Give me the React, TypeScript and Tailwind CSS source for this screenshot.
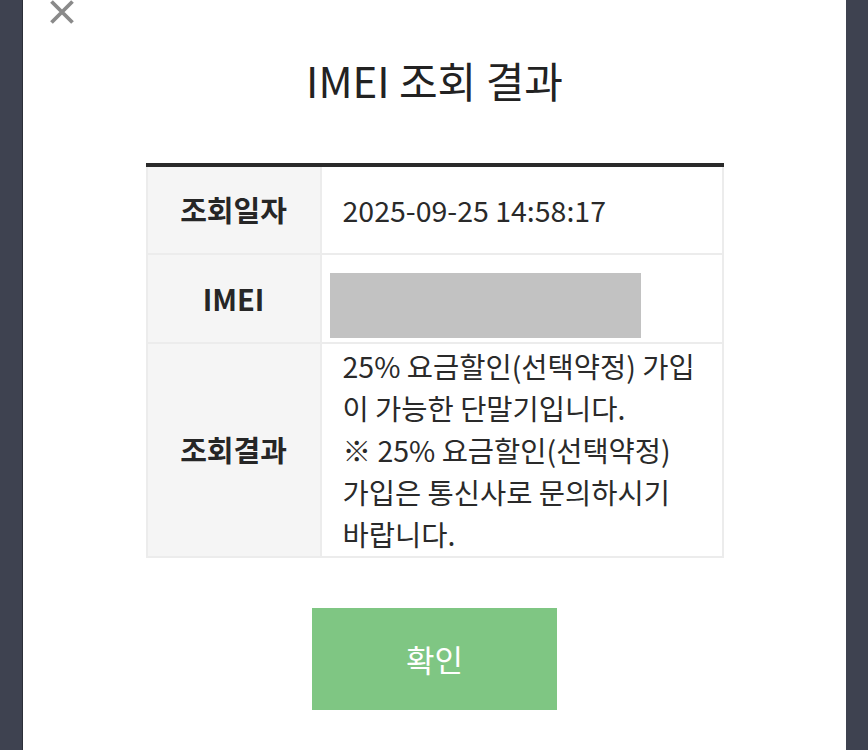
const FONT = { fontFamily: '"Noto Sans CJK KR", "Noto Sans", sans-serif' }

export default function App() {
  return (
    <div className="h-[750px] w-[868px] overflow-hidden bg-[#3e4250]" style={FONT}>
      <div className="ml-[22px] h-[750px] w-[824px] border-l border-[#2c2f38] bg-white relative">
        <button className="absolute left-[27px] top-0 text-[#8a8a8a]">
          <svg width="24" height="24" viewBox="0 0 24 24">
            <path d="M1.5 1.5 L22.5 22.5 M22.5 1.5 L1.5 22.5" stroke="currentColor" strokeWidth="3.8" />
          </svg>
        </button>

        <h2 className="pt-[51px] text-center text-[42px] leading-[58px] text-[#222]">IMEI 조회 결과</h2>

        <table className="mx-auto mt-[54px] w-[578px] border-collapse border-t-[4px] border-t-[#2a2a2a]">
          <tbody>
            <tr className="h-[89px]">
              <th className="w-[174px] border-2 border-[#ececec] bg-[#f5f5f5] text-[29px] font-bold text-[#262626]">조회일자</th>
              <td className="border-2 border-[#ececec] px-[21px] text-[28.5px] text-[#2a2a2a]">2025-09-25 14:58:17</td>
            </tr>
            <tr className="h-[89px]">
              <th className="border-2 border-[#ececec] bg-[#f5f5f5] text-[29px] font-bold text-[#262626]">IMEI</th>
              <td className="border-2 border-[#ececec] px-[8px] pt-[18px] align-top">
                <div className="h-[65px] w-[311px] bg-[#c2c2c2]" />
              </td>
            </tr>
            <tr>
              <th className="border-2 border-[#ececec] bg-[#f5f5f5] text-[29px] font-bold text-[#262626]">조회결과</th>
              <td className="border-2 border-[#ececec] px-[21px] pt-[1px] pb-[1px] text-[28.5px] leading-[42px] text-[#2a2a2a] break-all">
                25% 요금할인(선택약정) 가입이 가능한 단말기입니다.
                <br />※ 25% 요금할인(선택약정) 가입은 통신사로 문의하시기 바랍니다.
              </td>
            </tr>
          </tbody>
        </table>

        <div className="mt-[50px] flex justify-center">
          <button className="h-[102px] w-[245px] bg-[#7fc683] text-[31px] text-white">확인</button>
        </div>
      </div>
    </div>
  )
}
